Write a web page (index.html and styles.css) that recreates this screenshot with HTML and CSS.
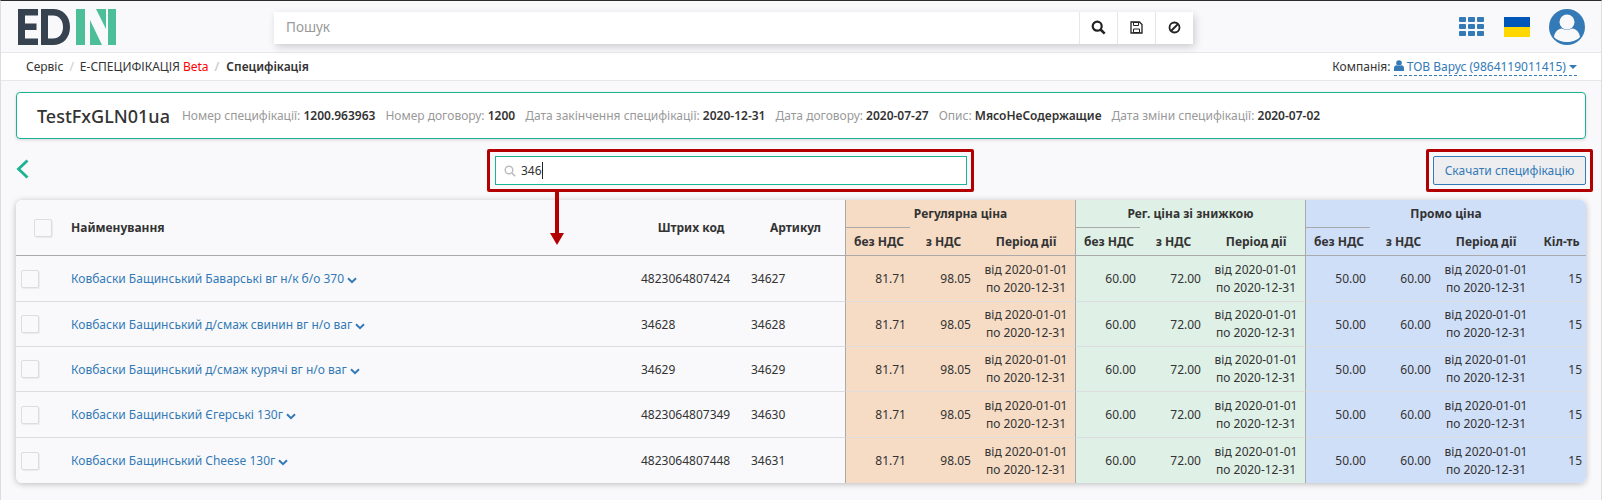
FILE: index.html
```html
<!DOCTYPE html>
<html lang="en">
<head>
    <meta charset="UTF-8">
    <meta name="viewport" content="width=device-width, initial-scale=1.0">
    <title>Специфікація</title>
    <link rel="stylesheet" href="styles.css">
</head>
<body>
    <header class="topbar">
        <svg class="logo" width="99" height="36" viewBox="0 0 99 36">
            <path fill="#36424f" d="M0 0h20v6.500H7v8h11.500v6.500H7v8.500h13V36H0z"/>
            <path fill="#36424f" fill-rule="evenodd" d="M23 0h12c10 0 17 7 17 18s-7 18-17 18H23zM30 6.500v23h5c6 0 10-4.500 10-11.500s-4-11.500-10-11.500z"/>
            <path fill="#4cbf98" d="M58 0h9v36h-9zM90 0h8v36h-8zM72 11l12 25H72zM78 0h10v20z"/>
        </svg>
        <div class="searchbar">
            <div class="searchbar-input">Пошук</div>
            <button class="searchbar-btn">
                <svg width="15" height="15" viewBox="0 0 15 15"><circle cx="6.200" cy="6.200" r="4.500" fill="none" stroke="#222" stroke-width="2.200"/><path d="M9.500 9.500l4.200 4.200" stroke="#222" stroke-width="2.500"/></svg>
            </button>
            <button class="searchbar-btn">
                <svg width="13" height="13" viewBox="0 0 13 13"><path d="M1 1h8.500L12 3.500V12H1z" fill="none" stroke="#222" stroke-width="1.300"/><path d="M3.500 1.500h5v3h-5zM3.500 8h6v3.500h-6z" fill="none" stroke="#222"/></svg>
            </button>
            <button class="searchbar-btn">
                <svg width="13" height="13" viewBox="0 0 13 13"><circle cx="6.500" cy="6.500" r="5" fill="none" stroke="#222" stroke-width="1.800"/><path d="M3 10l7-7" stroke="#222" stroke-width="1.800"/></svg>
            </button>
        </div>
        <div class="topbar-right">
            <div class="apps">
                <span></span><span></span><span></span>
                <span></span><span></span><span></span>
                <span></span><span></span><span></span>
            </div>
            <div class="flag"></div>
            <svg class="avatar" width="36" height="36" viewBox="0 0 36 36">
                <circle cx="18" cy="18" r="18" fill="#337ab7"/>
                <circle cx="18" cy="13" r="7.500" fill="#f9f9fb"/>
                <path d="M5 28c.500-5 4-8 8-8.500 3 1.700 7 1.700 10 0 4 .500 7.500 3.500 8 8.500-3 3.500-8 5-13 5S8 31.500 5 28z" fill="#f9f9fb"/>
            </svg>
        </div>
    </header>

    <nav class="crumbs">
        <ol class="crumbs-list">
            <li>Сервіс</li>
            <li>Е-СПЕЦИФІКАЦІЯ <span class="beta">Beta</span></li>
            <li class="active">Специфікація</li>
        </ol>
        <div class="company">
            Компанія:
            <span class="company-link">
                <svg width="10" height="11" viewBox="0 0 10 11"><circle cx="5" cy="3" r="2.800" fill="#337ab7"/><path d="M0 11V8c0-1.500 1.200-2.700 2.500-2.700 1.500 1 3.500 1 5 0C8.800 5.300 10 6.500 10 8v3z" fill="#337ab7"/></svg>
                ТОВ Варус (9864119011415)
                <i class="caret"></i>
            </span>
        </div>
    </nav>

    <section class="spec-card">
        <h2>TestFxGLN01ua</h2>
        <span class="spec-item">Номер специфікації: <b>1200.963963</b></span>
        <span class="spec-item">Номер договору: <b>1200</b></span>
        <span class="spec-item">Дата закінчення специфікації: <b>2020-12-31</b></span>
        <span class="spec-item">Дата договору: <b>2020-07-27</b></span>
        <span class="spec-item">Опис: <b>МясоНеСодержащие</b></span>
        <span class="spec-item">Дата зміни специфікації: <b>2020-07-02</b></span>
    </section>

    <div class="toolbar">
        <svg class="back" width="13" height="20" viewBox="0 0 13 20"><path d="M11.500 1.500L2.500 10l9 8.500" fill="none" stroke="#1ab394" stroke-width="2.800"/></svg>
        <div class="filter">
            <svg width="12" height="12" viewBox="0 0 12 12"><circle cx="5" cy="5" r="3.800" fill="none" stroke="#bbb" stroke-width="1.400"/><path d="M8 8l3.200 3.200" stroke="#bbb" stroke-width="1.600"/></svg>
            <span>346</span><i class="cursor"></i>
            <div class="mark mark-filter"></div>
            <svg class="mark-arrow" width="14" height="53" viewBox="0 0 14 53"><path d="M5 0h4v41h5l-7 12-7-12h5z" fill="#b30000"/></svg>
        </div>
        <div class="download">
            <button class="download-btn">Скачати специфікацію</button>
            <div class="mark mark-download"></div>
        </div>
    </div>

    <div class="table-card">
        <table class="goods">
            <colgroup>
                <col class="c-check"><col class="c-name"><col class="c-code"><col class="c-art">
                <col class="c-num"><col class="c-num"><col class="c-period">
                <col class="c-num"><col class="c-num"><col class="c-period">
                <col class="c-num"><col class="c-num"><col class="c-period"><col class="c-qty">
            </colgroup>
            <thead>
                <tr>
                    <th rowspan="2" class="check-head"><span class="box"></span></th>
                    <th rowspan="2" class="left">Найменування</th>
                    <th rowspan="2">Штрих код</th>
                    <th rowspan="2">Артикул</th>
                    <th colspan="3" class="orange start group">Регулярна ціна</th>
                    <th colspan="3" class="green start group">Рег. ціна зі знижкою</th>
                    <th colspan="4" class="blue start group">Промо ціна</th>
                </tr>
                <tr>
                    <th class="orange start sub">без НДС</th><th class="orange">з НДС</th><th class="orange">Період дії</th>
                    <th class="green start sub">без НДС</th><th class="green">з НДС</th><th class="green">Період дії</th>
                    <th class="blue start sub">без НДС</th><th class="blue">з НДС</th><th class="blue">Період дії</th><th class="blue">Кіл-ть</th>
                </tr>
            </thead>
            <tbody id="rows"></tbody>
        </table>
    </div>

    <script>
        const goods = [
            ['Ковбаски Бащинський Баварські вг н/к б/о 370', '4823064807424', '34627'],
            ['Ковбаски Бащинський д/смаж свинин вг н/о ваг', '34628', '34628'],
            ['Ковбаски Бащинський д/смаж курячі вг н/о ваг', '34629', '34629'],
            ['Ковбаски Бащинський Єгерські 130г', '4823064807349', '34630'],
            ['Ковбаски Бащинський Cheese 130г', '4823064807448', '34631']
        ];

        const period = 'від 2020-01-01<br>по 2020-12-31';

        // one price group: without VAT, with VAT, period
        function priceCells(color, net, gross) {
            return `
                <td class="${color} start num">${net}</td>
                <td class="${color} num">${gross}</td>
                <td class="${color} period">${period}</td>`;
        }

        document.getElementById('rows').innerHTML = goods.map(item => `
            <tr>
                <td class="check-cell"><span class="box"></span></td>
                <td><a class="name">${item[0]}</a> <svg class="chev" width="10" height="7" viewBox="0 0 10 7"><path d="M1 1.200l4 4 4-4" fill="none" stroke="#337ab7" stroke-width="2"/></svg></td>
                <td>${item[1]}</td>
                <td>${item[2]}</td>
                ${priceCells('orange', '81.71', '98.05')}
                ${priceCells('green', '60.00', '72.00')}
                ${priceCells('blue', '50.00', '60.00')}
                <td class="blue num">15</td>
            </tr>`).join('');
    </script>
</body>
</html>
```
FILE: styles.css
```css
* {
    box-sizing: border-box;
}
html, body {
    height: 500px;
    overflow: hidden;
}
body {
    margin: 0;
    font-family: 'Noto Sans', 'Open Sans', Arial, sans-serif;
    font-size: 12px;
    color: #333;
    background-color: #f9f9fb;
    border-top: 1px solid #2b2b2b;
    border-left: 1px solid #ddd;
    border-right: 1px solid #ddd;
}

/* top bar */
.topbar {
    height: 52px;
    display: flex;
    align-items: center;
    padding: 0 16px 0 17px;
    border-bottom: 1px solid #e7e7e7;
}
.logo {
    flex: none;
    margin-top: 1px;
}
.searchbar {
    display: flex;
    width: 919px;
    height: 32px;
    margin-left: 157px;
    margin-top: 2px;
    background-color: white;
    box-shadow: 2px 3px 8px rgba(0, 0, 0, 0.18);
}
.searchbar-input {
    flex: 1;
    padding-left: 12px;
    line-height: 31px;
    font-size: 13.500px;
    color: #999;
}
.searchbar-btn {
    width: 38px;
    padding: 0;
    border: none;
    border-left: 1px solid #e7e7e7;
    background-color: white;
    display: flex;
    align-items: center;
    justify-content: center;
}
.topbar-right {
    margin-left: auto;
    display: flex;
    align-items: center;
}
.apps {
    display: grid;
    grid-template-columns: repeat(3, 7px);
    grid-auto-rows: 5px;
    gap: 2px;
    margin-right: 20px;
}
.apps span {
    background-color: #337ab7;
    border-radius: 1px;
}
.flag {
    width: 26px;
    height: 20px;
    margin-right: 19px;
    background: linear-gradient(#0057b7 50%, #ffd700 50%);
}
.avatar {
    display: block;
}

/* breadcrumbs */
.crumbs {
    height: 28px;
    display: flex;
    align-items: center;
    justify-content: space-between;
    padding: 0 24px 0 25px;
    background-color: white;
    border-bottom: 1px solid #e7e7e7;
}
.crumbs-list {
    list-style: none;
    margin: 0;
    padding: 0;
    display: flex;
}
.crumbs-list li + li::before {
    content: "/";
    color: #ccc;
    padding: 0 6px;
}
.crumbs-list .active {
    font-weight: 600;
}
.crumbs-list .active::before {
    padding-right: 7px;
}
.beta {
    color: #ff0000;
}
.company-link {
    display: inline-block;
    color: #337ab7;
    border-bottom: 1px dashed #337ab7;
    line-height: 16px;
}
.caret {
    display: inline-block;
    border-top: 4px solid #337ab7;
    border-left: 4px solid transparent;
    border-right: 4px solid transparent;
    vertical-align: 2px;
}

/* spec card */
.spec-card {
    height: 47px;
    margin: 11px 15px 0;
    padding: 0 20px;
    display: flex;
    align-items: center;
    background-color: white;
    border: 1px solid #1ab394;
    border-radius: 4px;
    box-shadow: 0 1px 3px rgba(0, 0, 0, 0.15);
    white-space: nowrap;
}
.spec-card h2 {
    margin: 0 12px 0 0;
    font-size: 18px;
    font-weight: 500;
    color: #333;
}
.spec-item {
    margin-right: 10px;
    color: #999;
}
.spec-item b {
    color: #333;
    font-weight: 600;
}

/* back arrow, filter, download */
.toolbar {
    height: 61px;
    padding: 17px 15px 0;
    display: grid;
    grid-template-columns: 479px 472px 1fr;
    align-items: start;
}
.back {
    margin: 3px 0 0 0;
}
.filter {
    position: relative;
    height: 29px;
    display: flex;
    align-items: center;
    padding-left: 8px;
    background-color: white;
    border: 1px solid #1ab394;
}
.filter span {
    margin-left: 5px;
}
.cursor {
    width: 1px;
    height: 17px;
    background-color: #222;
}
.download {
    position: relative;
    justify-self: end;
}
.download-btn {
    display: block;
    width: 153px;
    height: 29px;
    padding: 0;
    font: inherit;
    color: #337ab7;
    background-color: #eeeef0;
    border: 1px solid #337ab7;
    border-radius: 2px;
}

/* red marks over the screenshot */
.mark {
    position: absolute;
    border: 3px solid #b30000;
    border-radius: 2px;
}
.mark-filter {
    inset: -8px -8px -8px -9px;
}
.mark-download {
    inset: -7px -7px -7px -7px;
}
.mark-arrow {
    position: absolute;
    left: 54px;
    top: 35px;
}

/* table */
.table-card {
    margin: 0 15px;
    border-radius: 6px;
    overflow: hidden;
    box-shadow: 0 1px 6px rgba(0, 0, 0, 0.25);
}
.goods {
    width: 100%;
    table-layout: fixed;
    border-collapse: separate;
    border-spacing: 0;
    background-color: #f9f9fb;
}
.c-check { width: 50px; }
.c-name { width: 570px; }
.c-code { width: 110px; }
.c-art { width: 99px; }
.c-num { width: 65px; }
.c-period { width: 100px; }
.c-qty { width: 51px; }
.goods th {
    font-weight: 700;
    text-align: center;
    padding: 0 5px;
    border-bottom: 1px solid #aaa;
    white-space: nowrap;
}
.goods th.left {
    text-align: left;
}
.goods th.group {
    height: 27px;
    border-bottom: none;
}
.goods th.sub {
    border-top: 1px solid #a9a9a9;
}
.goods thead tr:last-child th {
    height: 29px;
    padding: 0 4px 0 6px;
}
.goods td {
    height: 45px;
    padding: 0 5px;
    border-bottom: 1px solid #ddd;
    white-space: nowrap;
}
.goods td.num {
    padding-right: 4px;
}
.goods td.period {
    padding: 0 4px 0 6px;
}
.goods tbody tr:first-child td,
.goods tbody tr:nth-child(4) td {
    height: 46px;
}
.goods tbody tr:last-child td {
    border-bottom: none;
}
.check-head {
    padding-left: 0;
}
.check-cell {
    padding: 0 0 0 5px !important;
}
.box {
    display: inline-block;
    width: 18px;
    height: 18px;
    vertical-align: middle;
    background-color: #f9f9fb;
    border: 1px solid #ddd;
    border-radius: 2px;
    box-shadow: 1px 1px 1px rgba(0, 0, 0, 0.06);
}
.check-head .box {
    margin-left: 4px;
}
.name {
    color: #337ab7;
}
.chev {
    vertical-align: -1px;
}
.num {
    text-align: right;
}
.period {
    text-align: center;
    line-height: 18px;
}
.orange {
    background-color: #f6dcc5;
}
.green {
    background-color: #dff0e6;
}
.blue {
    background-color: #d0dff8;
}
.start {
    border-left: 1px solid #a9a9a9;
}
```
